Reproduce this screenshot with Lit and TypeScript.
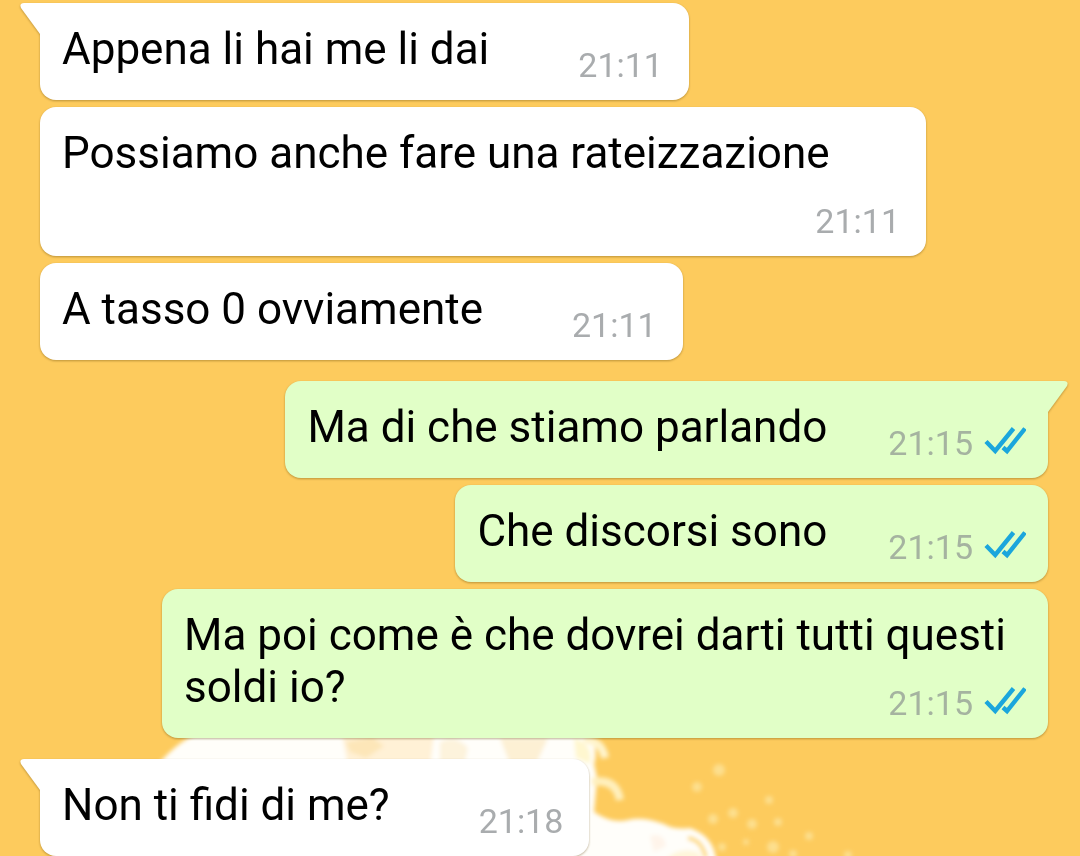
import { LitElement, html, css, svg } from "lit";
import { customElement, property } from "lit/decorators.js";

interface Message {
  text: string;
  time: string;
  sent?: boolean;
  first?: boolean;
}

const MESSAGES: Message[] = [
  { text: "Appena li hai me li dai", time: "21:11", first: true },
  { text: "Possiamo anche fare una rateizzazione", time: "21:11" },
  { text: "A tasso 0 ovviamente", time: "21:11" },
  { text: "Ma di che stiamo parlando", time: "21:15", sent: true, first: true },
  { text: "Che discorsi sono", time: "21:15", sent: true },
  { text: "Ma poi come è che dovrei darti tutti questi soldi io?", time: "21:15", sent: true },
  { text: "Non ti fidi di me?", time: "21:18", first: true },
];

@customElement("chat-bubble")
export class ChatBubble extends LitElement {
  @property() text = "";
  @property() time = "";
  @property({ type: Boolean, reflect: true }) sent = false;
  @property({ type: Boolean, reflect: true }) first = false;

  static styles = css`
    :host {
      display: flex;
      justify-content: flex-start;
      margin-top: 7px;
    }
    :host([sent]) {
      justify-content: flex-end;
    }
    :host([first]) {
      margin-top: 21px;
    }
    .bubble {
      position: relative;
      display: flow-root;
      box-sizing: border-box;
      max-width: calc(100% - 122px);
      padding: 20px 26px 15px 22px;
      border-radius: 16px;
      background: #fff;
      filter: drop-shadow(0 1px 1px rgba(90, 60, 0, 0.4));
    }
    .first {
      border-top-left-radius: 0;
    }
    .sent {
      padding-right: 22px;
      background: #e1ffc7;
    }
    .sent.first {
      border-top-left-radius: 16px;
      border-top-right-radius: 0;
    }
    .text {
      color: #000;
      font-size: 44px;
      line-height: 52px;
    }
    .meta {
      float: right;
      display: flex;
      align-items: center;
      gap: 11px;
      margin: 22px 0 0 89px;
      color: #a9acae;
      font-size: 34px;
      line-height: 40px;
    }
    .sent .meta {
      margin-left: 61px;
      color: #a5b3a0;
    }
    .ticks {
      display: block;
      width: 42px;
      height: 28px;
      margin-bottom: 4px;
    }
    .tail {
      position: absolute;
      top: 0;
      right: calc(100% - 1px);
      width: 21px;
      height: 32px;
      fill: #fff;
    }
    .sent .tail {
      right: auto;
      left: calc(100% - 1px);
      fill: #e1ffc7;
    }
  `;

  render() {
    const tail = this.sent
      ? svg`<path d="M0 0H17Q22 0 20 5L1 31H0Z" />`
      : svg`<path d="M21 0H4Q-1 0 1 5L20 31H21Z" />`;
    return html`
      <div class="bubble ${this.sent ? "sent" : ""} ${this.first ? "first" : ""}">
        ${this.first ? html`<svg class="tail" viewBox="0 0 21 32" aria-hidden="true">${tail}</svg>` : ""}
        <span class="text">${this.text}</span>
        <span class="meta">
          <time>${this.time}</time>
          ${this.sent
            ? html`<svg class="ticks" viewBox="0 0 42 28" role="img" aria-label="Letto"
                fill="none" stroke="#1ba6dc" stroke-width="4.4">
                <path d="M2 14.5L11.2 24L29.5 1.5" />
                <path d="M19 20.5L23 24L41 1.5" />
              </svg>`
            : ""}
        </span>
      </div>
    `;
  }
}

@customElement("app-root")
export class AppRoot extends LitElement {
  static styles = css`
    :host {
      display: block;
      font-family: Roboto, "Liberation Sans", sans-serif;
    }
    .chat {
      position: relative;
      box-sizing: border-box;
      min-height: 100vh;
      padding: 3px 32px 0 40px;
      overflow: hidden;
      background: #fdcb5d;
    }
    .chat chat-bubble:first-of-type {
      margin-top: 0;
    }
    .wallpaper {
      position: absolute;
      left: 0;
      bottom: 0;
      width: 1080px;
      height: 136px;
    }
  `;

  render() {
    return html`
      <main class="chat">
        <svg class="wallpaper" viewBox="0 720 1080 136" aria-hidden="true">
          <defs>
            <filter id="soft" x="-10%" y="-10%" width="120%" height="120%"><feGaussianBlur stdDeviation="2" /></filter>
          </defs>
          <g filter="url(#soft)">
            <path fill="#fffefa" d="M150 775Q172 744 200 732L200 715H585L592 740Q598 752 594 764L597 778L594 812Q612 824 628 820Q642 816 664 824Q674 830 690 828Q708 834 714 850L718 866H150Z" />
            <path fill="#fff1d6" d="M342 735H434L430 766H348Z" />
            <path fill="#fde6b8" d="M346 742L372 737L384 746L366 758L350 752Z" />
            <path fill="#fdf3dc" d="M440 742Q456 734 468 748L464 766H440Z" />
            <path fill="#fdf0d4" d="M500 738H548L536 764H510Z" />
            <path fill="#fff7cf" d="M574 738Q594 744 590 764L576 758Z" />
            <g fill="none" stroke="#fff4cc" stroke-width="8">
              <path d="M584 739Q602 741 605 758" />
              <path stroke="#fff0bd" d="M592 782Q616 778 620 800" />
            </g>
            <path fill="#fff6da" d="M664 862Q676 846 698 852L704 862Z" />
            <path fill="#fff4ea" d="M650 836Q664 832 666 846L654 852Z" />
            <path fill="none" stroke="#fdd873" stroke-width="4" d="M688 838Q702 840 706 858" />
            <g fill="#fddf8e">
              <circle cx="719" cy="770" r="6" />
              <circle cx="697" cy="787" r="5" />
              <circle cx="769" cy="800" r="4" />
              <circle cx="733" cy="813" r="5" />
              <circle cx="713" cy="819" r="5" />
              <circle cx="752" cy="824" r="5" />
              <circle cx="778" cy="822" r="4" />
              <circle cx="809" cy="836" r="4" />
              <circle cx="773" cy="847" r="6" />
              <circle cx="746" cy="842" r="3" />
              <circle cx="722" cy="847" r="4" />
              <circle cx="793" cy="854" r="4" />
              <circle cx="848" cy="855" r="4" />
            </g>
          </g>
        </svg>
        ${MESSAGES.map(
          (m) => html`<chat-bubble .text=${m.text} .time=${m.time} ?sent=${!!m.sent} ?first=${!!m.first}></chat-bubble>`
        )}
      </main>
    `;
  }
}
